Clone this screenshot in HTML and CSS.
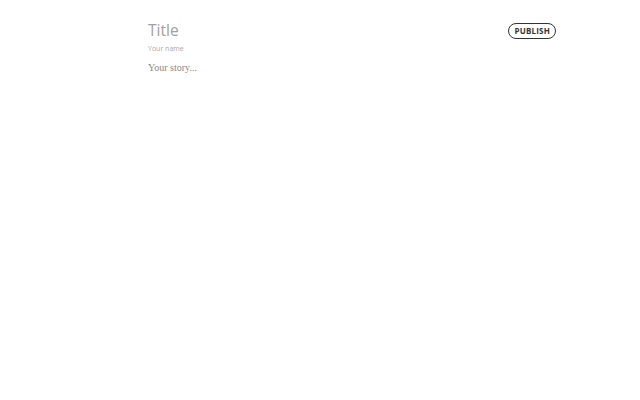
FILE: index.html
```html
<!DOCTYPE html>
<html>
<head>
<meta charset="utf-8">
<link rel="stylesheet" href="styles.css">
</head>
<body>
<div class="page">
  <header class="top">
    <div class="meta">
      <h1 class="title">Title</h1>
      <div class="author">Your name</div>
    </div>
    <button class="publish">PUBLISH</button>
  </header>
  <div class="story">Your story...</div>
</div>
</body>
</html>
```
FILE: styles.css
```css
html, body {
  margin: 0;
  padding: 0;
  background: #fff;
}
.page {
  width: 408px;
  margin-left: 148px;
  padding-top: 19px;
}
.top {
  display: flex;
  justify-content: space-between;
  align-items: flex-start;
}
.title {
  margin: 0;
  font-family: "Open Sans", sans-serif;
  font-weight: 400;
  font-size: 15.5px;
  line-height: 22px;
  color: #a0a0a0;
}
.author {
  margin-top: 3px;
  font-family: "Open Sans", sans-serif;
  font-size: 7px;
  line-height: 10px;
  color: #aaa;
}
.publish {
  margin-top: 4px;
  padding: 0 5px;
  height: 16px;
  border: 1.5px solid #333;
  border-radius: 8px;
  background: #fff;
  font-family: "Open Sans", sans-serif;
  font-weight: 700;
  font-size: 8px;
  line-height: 12px;
  color: #333;
  letter-spacing: 0.2px;
}
.story {
  margin-top: 7px;
  font-family: "Liberation Serif", serif;
  font-size: 10px;
  line-height: 14px;
  color: #888;
}
```
